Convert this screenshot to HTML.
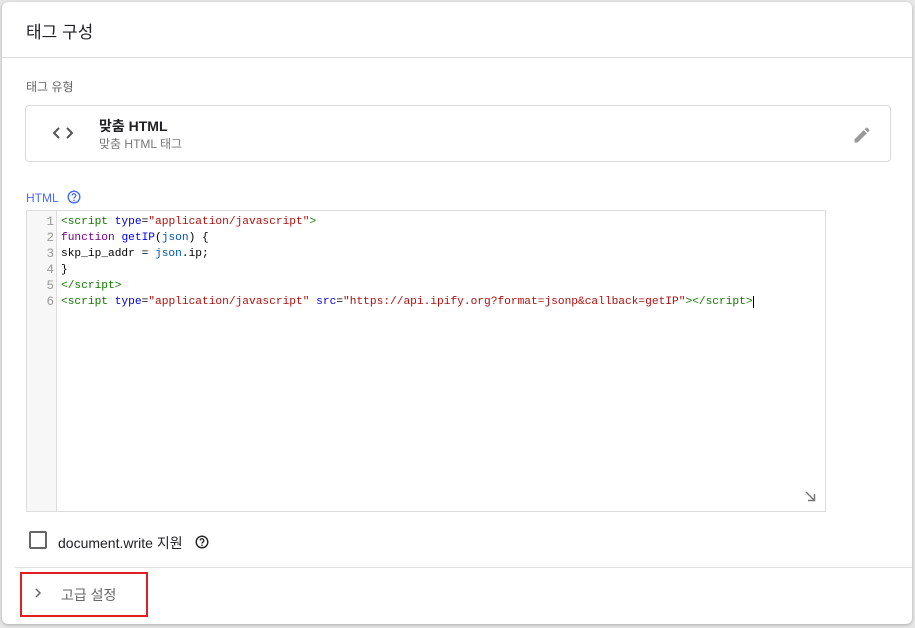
<!DOCTYPE html>
<html><head><meta charset="utf-8"><style>
*{box-sizing:border-box;margin:0;padding:0}
body{width:915px;height:628px;background:#e6e6e6;font-family:"Liberation Sans","Noto Sans CJK KR",sans-serif;position:relative;overflow:hidden}
.card{position:absolute;left:2px;top:2px;width:910px;height:622px;background:#fff;border-radius:6px;box-shadow:0 1px 3px rgba(0,0,0,.25)}
.abs{position:absolute}
.code{font-family:"Liberation Mono","Noto Sans CJK KR",monospace;font-size:11.2px;line-height:16px;white-space:pre}
.t{color:#170}.a{color:#00c}.s{color:#a11}.k{color:#708}.f{color:#00f}.v{color:#05a}
</style></head><body>
<div class="card">
<div class="abs" style="left:24px;top:16px;font-size:17px;color:#202124">태그 구성</div>
<div class="abs" style="left:0;top:55px;width:910px;height:1px;background:#ddd"></div>
<div class="abs" style="left:24px;top:76px;font-size:12px;color:#666">태그 유형</div>
<div class="abs" style="left:23px;top:103px;width:866px;height:57px;border:1px solid #dadada;border-radius:4px"></div>
<svg class="abs" style="left:50px;top:124px" width="22" height="14" viewBox="0 0 22 14"><path d="M7 2L2 7l5 5M15 2l5 5-5 5" fill="none" stroke="#555" stroke-width="2"/></svg>
<div class="abs" style="left:97px;top:114px;font-size:14px;font-weight:bold;color:#202124">맞춤 HTML</div>
<div class="abs" style="left:97px;top:133px;font-size:12px;color:#777">맞춤 HTML 태그</div>
<svg class="abs" style="left:850px;top:123px" width="20" height="20" viewBox="0 0 24 24"><path d="M3 17.25V21h3.75L17.81 9.94l-3.75-3.75L3 17.25zM20.71 7.04a1 1 0 000-1.41l-2.34-2.34a1 1 0 00-1.410 0l-1.83 1.83 3.75 3.75 1.83-1.83z" fill="#999"/></svg>
<div class="abs" style="left:24px;top:189px;font-size:12px;color:#4a6cf0">HTML</div>
<svg class="abs" style="left:65px;top:188px" width="14" height="14" viewBox="0 0 14 14"><circle cx="7" cy="7" r="5.8" fill="none" stroke="#4a6cf0" stroke-width="1.4"/><path d="M5.2 5.5a1.8 1.8 0 113 1.3c-.8.5-1.2.8-1.2 1.7" fill="none" stroke="#4a6cf0" stroke-width="1.3"/><circle cx="7" cy="10.3" r=".8" fill="#4a6cf0"/></svg>
<div class="abs" style="left:24px;top:208px;width:800px;height:302px;border:1px solid #ddd"></div>
<div class="abs" style="left:25px;top:209px;width:30px;height:300px;background:#f7f7f7;border-right:1px solid #ddd"></div>
<div class="abs code" style="left:25px;top:212px;width:27px;text-align:right;color:#999;font-size:12.5px">1
2
3
4
5
6</div>
<div class="abs code" style="left:59px;top:212px;color:#000"><span class="t">&lt;script</span> <span class="a">type</span>=<span class="s">"application/javascript"</span><span class="t">&gt;</span>
<span class="k">function</span> <span class="f">getIP</span>(<span class="v">json</span>) {
skp_ip_addr = <span class="v">json</span>.ip;
}
<span class="t">&lt;/script&gt;</span>
<span class="t">&lt;script</span> <span class="a">type</span>=<span class="s">"application/javascript"</span> <span class="a">src</span>=<span class="s">"https://api.ipify.org?format=jsonp&amp;callback=getIP"</span><span class="t">&gt;&lt;/script&gt;</span><span style="border-left:1px solid #000"></span></div>
<svg class="abs" style="left:802px;top:488px" width="12" height="12" viewBox="0 0 12 12"><path d="M2 2l8 8M4 10.5h6.5V4" fill="none" stroke="#777" stroke-width="1.5"/></svg>
<div class="abs" style="left:27px;top:529px;width:18px;height:18px;border:2px solid #666;border-radius:2px"></div>
<div class="abs" style="left:56px;top:531px;font-size:14px;color:#202124">document.write 지원</div>
<svg class="abs" style="left:193px;top:533px" width="14" height="14" viewBox="0 0 14 14"><circle cx="7" cy="7" r="5.8" fill="none" stroke="#222" stroke-width="1.4"/><path d="M5.2 5.5a1.8 1.8 0 113 1.3c-.8.5-1.2.8-1.2 1.7" fill="none" stroke="#222" stroke-width="1.3"/><circle cx="7" cy="10.3" r=".8" fill="#222"/></svg>
<div class="abs" style="left:13px;top:565px;width:897px;height:1px;background:#e0e0e0"></div>
<div class="abs" style="left:18px;top:570px;width:128px;height:45px;border:2px solid #e21d24"></div>
<svg class="abs" style="left:32px;top:586px" width="8" height="10" viewBox="0 0 8 10"><path d="M2 1l4 4-4 4" fill="none" stroke="#666" stroke-width="1.5"/></svg>
<div class="abs" style="left:59px;top:583px;font-size:14px;color:#666">고급 설정</div>
</div>
</body></html>
